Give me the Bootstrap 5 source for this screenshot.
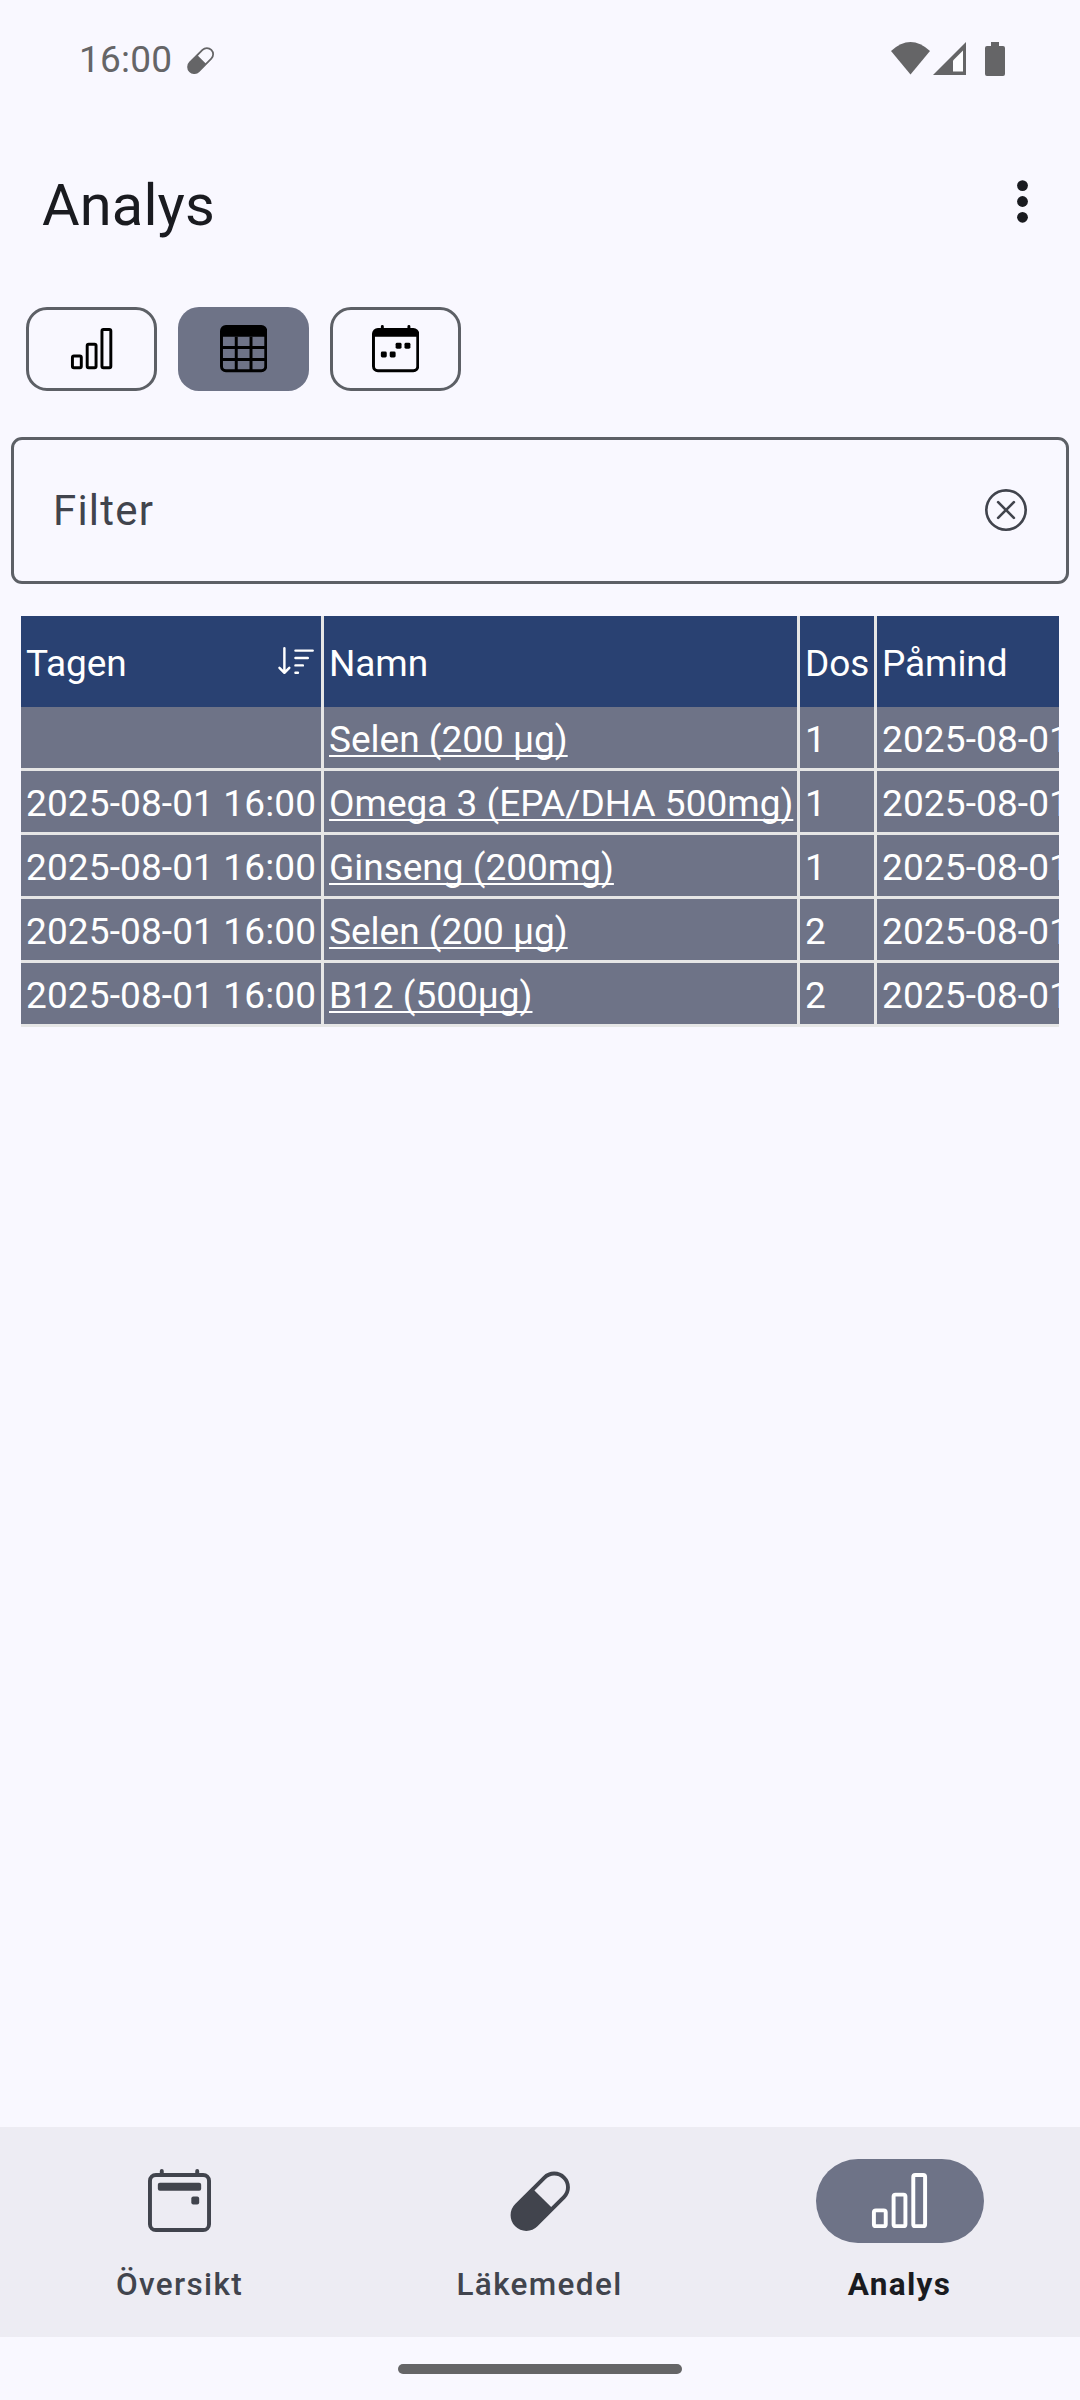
<!DOCTYPE html>
<html lang="sv">
<head>
<meta charset="utf-8">
<meta name="viewport" content="width=device-width, initial-scale=1">
<title>Analys</title>
<link href="https://cdn.jsdelivr.net/npm/bootstrap@5.3.0/dist/css/bootstrap.min.css" rel="stylesheet">
<style>
  body { width: 1080px; height: 2400px; background: #f9f8ff; color: #1a1b20; font-family: Roboto, "Noto Sans", sans-serif; overflow: hidden; }
  svg { display: block; flex: none; }
  .status-bar { height: 118px; padding: 0 75px 0 79px; color: #656567; font-size: 37px; line-height: 44px; }
  .status-time { letter-spacing: .2px; padding-top: 1px; }
  .status-pill { margin-left: 14px; margin-top: 2px; }
  .top-bar { height: 167px; padding: 0 52px 0 42px; }
  .top-title { font-size: 57.75px; line-height: 70px; padding-top: 6px; font-weight: 400; letter-spacing: .15px; }
  .view-picker { gap: 21px; padding: 22px 26px 0; }
  .view-btn { --bs-btn-color: #000; --bs-btn-padding-x: 0; --bs-btn-padding-y: 0; width: 131px; height: 84px; border: 3px solid #5d6066; border-radius: 21px; }
  .view-btn.active { --bs-btn-active-bg: #6e7387; --bs-btn-active-color: #000; border: 0; }
  .filter-box { margin: 46px 11px 0; height: 147px; border: 3px solid #5d6066; border-radius: 11px; padding: 0 39px 0 39px; color: #41444d; }
  .filter-box .form-control { color: #41444d; font-size: 42px; line-height: 50px; letter-spacing: 1.2px; background: none; }
  .filter-box .form-control::placeholder { color: #41444d; opacity: 1; }
  .filter-box svg { margin-bottom: 1px; }
  .table-wrap { margin: 32px 21px 0; }
  .log-table { width: 1156px; table-layout: fixed; border-collapse: separate; border-spacing: 0; font-size: 37px; color: #fff; white-space: nowrap; }
  .log-table th, .log-table td { border: 0 solid #e6e6e6; border-right-width: 3px; padding: 4px 5px 0; font-weight: 400; color: #fff; }
  .log-table th { background: #294172; line-height: 87px; height: 91px; letter-spacing: -.1px; }
  .log-table td { background: #6e7387; line-height: 57px; height: 64px; border-bottom-width: 3px; letter-spacing: .12px; }
  .log-table a { color: #fff; letter-spacing: 0; text-decoration-thickness: 2px; text-underline-offset: 3px; text-decoration-skip-ink: none; }
  .sort-glyph { margin-top: -4px; }
  .bottom-nav { height: 210px; background: #edecf3; padding-top: 32px; }
  .bottom-nav .nav-link { color: #41444d; padding: 0; }
  .bottom-nav .nav-link.active { color: #1a1b20; }
  .nav-pill { width: 168px; height: 84px; border-radius: 42px; }
  .nav-pill svg { margin: 0 1px 1px 0; }
  .active .nav-pill { background: #6e7387; color: #fff; }
  .nav-text { font-size: 31.5px; line-height: 40px; font-weight: 500; letter-spacing: 1.35px; margin-top: 22px; padding-right: 1px; }
  .active .nav-text { font-weight: 700; }
  .gesture-area { height: 63px; padding-top: 27px; }
  .gesture-bar { width: 284px; height: 10px; border-radius: 5px; background: #656567; }
</style>
<script src="https://cdn.jsdelivr.net/npm/bootstrap@5.3.0/dist/js/bootstrap.bundle.min.js"></script>
</head>
<body class="d-flex flex-column">

<svg width="0" height="0" class="d-none">
  <symbol id="capsule" viewBox="0 0 16 16"><path fill="currentColor" d="M1.828 8.9 8.9 1.827a4 4 0 1 1 5.657 5.657l-7.07 7.071A4 4 0 1 1 1.827 8.9Zm9.128.771 2.893-2.893a3 3 0 1 0-4.243-4.242L6.713 5.429l4.243 4.242Z"/></symbol>
  <symbol id="bars" viewBox="0 0 32 32"><g fill="none" stroke="currentColor" stroke-width="2"><rect x="3" y="21" width="6" height="8" rx="1"/><rect x="13" y="13" width="6" height="16" rx="1"/><rect x="23" y="3" width="6" height="26" rx="1"/></g></symbol>
</svg>

<header class="status-bar d-flex align-items-center justify-content-between">
  <div class="d-flex align-items-center">
    <span class="status-time">16:00</span>
    <svg class="status-pill" width="28.5" height="28.5"><use href="#capsule"/></svg>
  </div>
  <svg width="114" height="34" viewBox="0 0 114 34" fill="currentColor">
    <path d="M0 9Q19.5-9 39 9L19.5 32.5Z"/>
    <path d="M42 33 75 0V33Z"/><path fill="#fdfdff" d="M62 18.5 72 8.5V29.5H62Z"/>
    <path d="M100 0h8v4h4a2 2 0 0 1 2 2v26a2 2 0 0 1-2 2H96a2 2 0 0 1-2-2V6a2 2 0 0 1 2-2h4z"/>
  </svg>
</header>

<div class="top-bar d-flex align-items-center justify-content-between">
  <h1 class="top-title m-0">Analys</h1>
  <svg width="11" height="43" viewBox="0 0 11 43" fill="currentColor"><circle cx="5.5" cy="5.6" r="5.4"/><circle cx="5.5" cy="21.5" r="5.4"/><circle cx="5.5" cy="37.3" r="5.4"/></svg>
</div>

<div class="view-picker d-flex">
  <button type="button" class="btn view-btn d-flex align-items-center justify-content-center" aria-label="Diagram">
    <svg width="47.25" height="47.25"><use href="#bars"/></svg>
  </button>
  <button type="button" class="btn view-btn active d-flex align-items-center justify-content-center" aria-label="Tabell">
    <svg width="47.25" height="47.25" viewBox="0 0 32 32" fill="none" stroke="currentColor" stroke-width="2"><rect x="1" y="1" width="30" height="30" rx="3"/><path fill="currentColor" stroke="none" d="M1 4a3 3 0 0 1 3-3h24a3 3 0 0 1 3 3v4H1z"/><path d="M11 8V31M21 8V31M1 15.2H31M1 23.3H31"/></svg>
  </button>
  <button type="button" class="btn view-btn d-flex align-items-center justify-content-center" aria-label="Kalender">
    <svg width="47.25" height="47.25" viewBox="0 0 32 32" fill="currentColor"><rect x="1" y="3" width="30" height="28" rx="3" fill="none" stroke="currentColor" stroke-width="2"/><path d="M1 5a3 3 0 0 1 3-2h24a3 3 0 0 1 3 2v3H1z"/><path d="M6 3V1a1 1 0 0 1 2 0v2zM24 3V1a1 1 0 0 1 2 0v2z"/><rect x="16" y="12" width="4" height="4" rx="1"/><rect x="22" y="12" width="4" height="4" rx="1"/><rect x="6" y="18" width="4" height="4" rx="1"/><rect x="12" y="18" width="4" height="4" rx="1"/></svg>
  </button>
</div>

<div class="filter-box d-flex align-items-center">
  <input type="text" class="form-control border-0 p-0 shadow-none" placeholder="Filter" aria-label="Filter">
  <svg width="42" height="42" viewBox="0 0 16 16" fill="currentColor"><path d="M8 15A7 7 0 1 1 8 1a7 7 0 0 1 0 14m0 1A8 8 0 1 0 8 0a8 8 0 0 0 0 16"/><path d="M4.646 4.646a.5.5 0 0 1 .708 0L8 7.293l2.646-2.647a.5.5 0 0 1 .708.708L8.707 8l2.647 2.646a.5.5 0 0 1-.708.708L8 8.707l-2.646 2.647a.5.5 0 0 1-.708-.708L7.293 8 4.646 5.354a.5.5 0 0 1 0-.708"/></svg>
</div>

<main class="table-wrap overflow-hidden">
  <table class="log-table">
    <colgroup><col style="width:303px"><col style="width:476px"><col style="width:77px"><col style="width:300px"></colgroup>
    <thead>
      <tr>
        <th><div class="d-flex align-items-center justify-content-between">Tagen
          <svg class="sort-glyph" width="39.4" height="39.4" viewBox="0 0 16 16" fill="currentColor"><path d="M3.5 2.5a.5.5 0 0 0-1 0v8.793l-1.146-1.147a.5.5 0 0 0-.708.708l2 1.999.007.007a.497.497 0 0 0 .7-.006l2-2a.5.5 0 0 0-.707-.708L3.5 11.293zm3.5 1a.5.5 0 0 1 .5-.5h7a.5.5 0 0 1 0 1h-7a.5.5 0 0 1-.5-.5M7.5 6a.5.5 0 0 0 0 1h5a.5.5 0 0 0 0-1zm0 3a.5.5 0 0 0 0 1h3a.5.5 0 0 0 0-1zm0 3a.5.5 0 0 0 0 1h1a.5.5 0 0 0 0-1z"/></svg></div></th>
        <th>Namn</th><th>Dos</th><th>Påmind</th>
      </tr>
    </thead>
    <tbody>
      <tr><td></td><td><a href="#">Selen (200 µg)</a></td><td>1</td><td>2025-08-01 16:00</td></tr>
      <tr><td>2025-08-01 16:00</td><td><a href="#">Omega 3 (EPA/DHA 500mg)</a></td><td>1</td><td>2025-08-01 16:00</td></tr>
      <tr><td>2025-08-01 16:00</td><td><a href="#">Ginseng (200mg)</a></td><td>1</td><td>2025-08-01 16:00</td></tr>
      <tr><td>2025-08-01 16:00</td><td><a href="#">Selen (200 µg)</a></td><td>2</td><td>2025-08-01 16:00</td></tr>
      <tr><td>2025-08-01 16:00</td><td><a href="#">B12 (500µg)</a></td><td>2</td><td>2025-08-01 16:00</td></tr>
    </tbody>
  </table>
</main>

<nav class="bottom-nav nav nav-fill mt-auto flex-nowrap">
  <a class="nav-link col-4 d-flex flex-column align-items-center" href="#">
    <span class="nav-pill d-flex align-items-center justify-content-center"><svg width="63" height="63" viewBox="0 0 32 32" fill="currentColor"><rect x="1" y="3" width="30" height="28" rx="3" fill="none" stroke="currentColor" stroke-width="2"/><path d="M6 3V1a1 1 0 0 1 2 0v2zM24 3V1a1 1 0 0 1 2 0v2z"/><rect x="5" y="7" width="22" height="4" rx="1"/><rect x="22" y="14" width="4" height="4" rx="1"/></svg></span>
    <span class="nav-text">Översikt</span>
  </a>
  <a class="nav-link col-4 d-flex flex-column align-items-center" href="#">
    <span class="nav-pill d-flex align-items-center justify-content-center"><svg width="63" height="63"><use href="#capsule"/></svg></span>
    <span class="nav-text">Läkemedel</span>
  </a>
  <a class="nav-link active col-4 d-flex flex-column align-items-center" href="#">
    <span class="nav-pill d-flex align-items-center justify-content-center"><svg width="63" height="63"><use href="#bars"/></svg></span>
    <span class="nav-text">Analys</span>
  </a>
</nav>
<div class="gesture-area d-flex justify-content-center"><div class="gesture-bar"></div></div>
</body>
</html>
